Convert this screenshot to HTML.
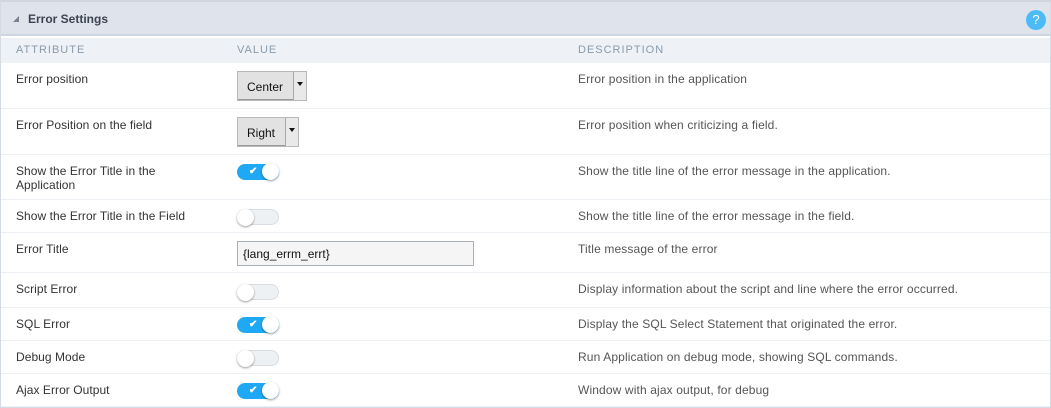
<!DOCTYPE html>
<html><head><style>
*{box-sizing:border-box;margin:0;padding:0}
body{width:1051px;height:408px;background:#fff;font-family:"Liberation Sans",Arial,sans-serif;font-size:12px;color:#333;position:relative;overflow:hidden}
.frame{position:absolute;left:0;top:0;width:1051px;height:408px;border:1px solid #d5dbe3;border-top:2px solid #cfd6df}
.hdr{position:absolute;left:1px;top:2px;width:1049px;height:34px;background:#dfe4ec;border-bottom:2px solid #cdd5df}
.hdr .t{position:absolute;left:27px;top:10px;font-weight:bold;font-size:12px;color:#3c4452}
.hdr .tri{position:absolute;left:12px;top:14px;width:0;height:0;border-left:6px solid transparent;border-bottom:6px solid #7a828e}
.help{position:absolute;left:1025px;top:8px;width:20px;height:20px;border-radius:50%;background:#4cbcf7;color:#fff;font-size:13px;text-align:center;line-height:20px}
.ch{position:absolute;left:1px;top:38px;width:1049px;height:25px;background:#eef2f6;color:#8a9aab;font-size:11px;letter-spacing:1px}
.ch span{position:absolute;top:6px}
.row{position:absolute;left:1px;width:1049px;border-bottom:1px solid #edf0f4}
.row .a,.row .d{position:absolute;top:9px;line-height:14px}
.row .a{left:15px;width:170px;letter-spacing:0.05px}
.row .d{left:577px;color:#555;letter-spacing:0.13px}
.sel{position:absolute;left:236px;top:8px;height:30px;background:#e2e2e2;border:1px solid #b8b8b8;box-shadow:inset -1px -1px 0 #999;font-size:12px;color:#111;padding:8px 0 0 9px}
.sel i{position:absolute;right:0;top:0;width:13px;height:28px;border-left:1px solid #aaa;background:#e9e9e9}
.sel i:after{content:"";position:absolute;left:3px;top:10px;border-left:3px solid transparent;border-right:3px solid transparent;border-top:4px solid #111}
.tg{position:absolute;left:236px;width:42px;height:16px;border-radius:8px;background:#1fa9f4}
.tg:after{content:"";position:absolute;right:0;top:-1px;width:17px;height:17px;border-radius:50%;background:#fff;box-shadow:0 1px 2px rgba(0,0,0,.4)}
.tg b{position:absolute;left:12px;top:2px;color:#fff;font-size:10px}
.tg.off{background:#eef1f4;border:1px solid #d8dde3}
.tg.off:after{left:-1px;right:auto}
.inp{position:absolute;left:236px;top:8px;width:237px;height:25px;border:1px solid #a9b0bc;background:#f5f5f5;padding:5px 5px;font-size:12px;color:#111}
</style></head><body>
<div class="frame"></div>
<div class="hdr"><div class="tri"></div><div class="t">Error Settings</div><div class="help">?</div></div>
<div class="ch"><span style="left:15px">ATTRIBUTE</span><span style="left:236px">VALUE</span><span style="left:577px">DESCRIPTION</span></div>

<div class="row" style="top:63px;height:46px"><div class="a">Error position</div><div class="sel" style="width:70px">Center<i></i></div><div class="d">Error position in the application</div></div>
<div class="row" style="top:109px;height:46px"><div class="a">Error Position on the field</div><div class="sel" style="width:62px">Right<i></i></div><div class="d">Error position when criticizing a field.</div></div>
<div class="row" style="top:155px;height:45px"><div class="a">Show the Error Title in the Application</div><div class="tg" style="top:9px"><b>✔</b></div><div class="d">Show the title line of the error message in the application.</div></div>
<div class="row" style="top:200px;height:33px"><div class="a">Show the Error Title in the Field</div><div class="tg off" style="top:9px"></div><div class="d">Show the title line of the error message in the field.</div></div>
<div class="row" style="top:233px;height:40px"><div class="a">Error Title</div><div class="inp">{lang_errm_errt}</div><div class="d">Title message of the error</div></div>
<div class="row" style="top:273px;height:35px"><div class="a">Script Error</div><div class="tg off" style="top:11px"></div><div class="d">Display information about the script and line where the error occurred.</div></div>
<div class="row" style="top:308px;height:33px"><div class="a">SQL Error</div><div class="tg" style="top:9px"><b>✔</b></div><div class="d">Display the SQL Select Statement that originated the error.</div></div>
<div class="row" style="top:341px;height:33px"><div class="a">Debug Mode</div><div class="tg off" style="top:9px"></div><div class="d">Run Application on debug mode, showing SQL commands.</div></div>
<div class="row" style="top:374px;height:33px"><div class="a">Ajax Error Output</div><div class="tg" style="top:9px"><b>✔</b></div><div class="d">Window with ajax output, for debug</div></div>
</body></html>
